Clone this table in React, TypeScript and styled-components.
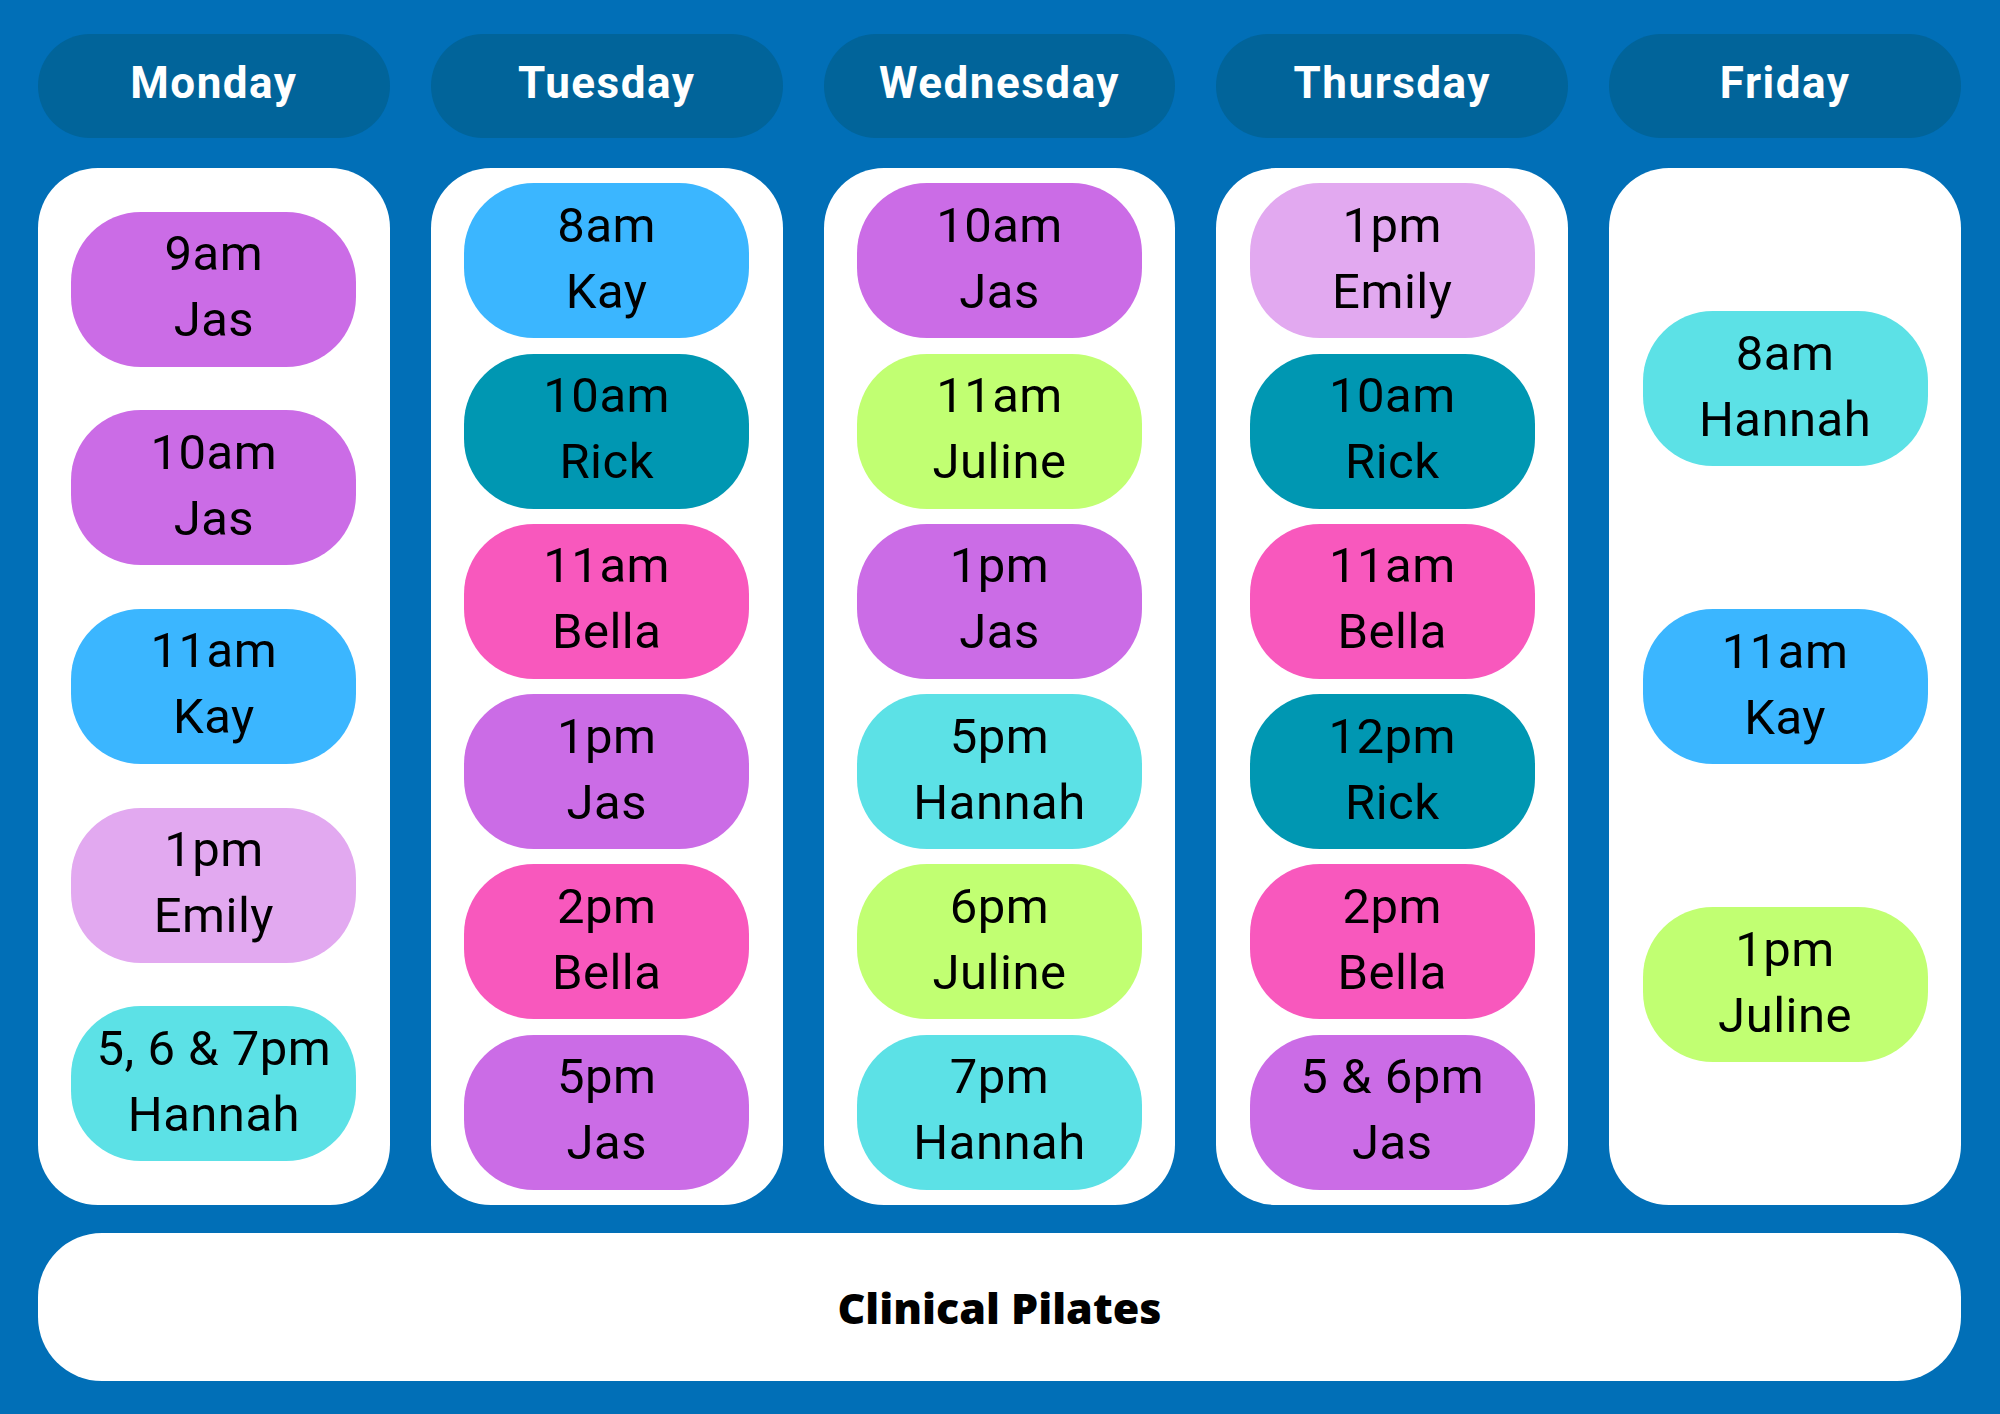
import styled, { createGlobalStyle } from 'styled-components';

const GlobalStyle = createGlobalStyle`
  html, body {
    margin: 0;
    padding: 0;
    background: #016fb7;
  }
  * {
    box-sizing: border-box;
  }
`;

const Board = styled.main`
  width: 2000px;
  height: 1414px;
  padding: 34px 39px 0 38px;
  background: #016fb7;
  display: grid;
  grid-template-columns: repeat(5, 1fr);
  grid-template-rows: 104px 1037px 146px;
  column-gap: 41px;
  row-gap: 30px;
  font-family: Roboto, 'Noto Sans', sans-serif;
`;

const DayHeader = styled.div`
  display: flex;
  align-items: center;
  justify-content: center;
  padding-bottom: 6px;
  background: #01649a;
  border-radius: 52px;
  color: #ffffff;
  font-size: 44px;
  font-weight: 700;
  letter-spacing: 1.5px;
`;

const DayColumn = styled.section`
  display: flex;
  flex-direction: column;
  align-items: center;
  justify-content: space-evenly;
  background: #ffffff;
  border-radius: 60px;
`;

const Slot = styled.div<{ $bg: string }>`
  width: 285px;
  height: 155px;
  display: flex;
  flex-direction: column;
  align-items: center;
  justify-content: center;
  padding-bottom: 4px;
  background: ${({ $bg }) => $bg};
  border-radius: 70px;
  color: #000000;
  font-size: 49px;
  line-height: 66px;
  letter-spacing: 0.5px;
  text-align: center;
`;

const Banner = styled.footer`
  grid-column: 1 / -1;
  margin-top: -2px;
  display: flex;
  align-items: center;
  justify-content: center;
  background: #ffffff;
  border-radius: 64px;
  font-family: 'Open Sans', 'Noto Sans', sans-serif;
  font-size: 43px;
  font-weight: 800;
  color: #000000;
`;

const colors = {
  purple: '#cb6ce6',
  lilac: '#e2a9f0',
  sky: '#3bb6ff',
  teal: '#0097b2',
  pink: '#f858bd',
  cyan: '#5ce1e6',
  lime: '#c1ff72',
};

type Session = { time: string; who: string; color: keyof typeof colors };

const week: { day: string; sessions: Session[] }[] = [
  {
    day: 'Monday',
    sessions: [
      { time: '9am', who: 'Jas', color: 'purple' },
      { time: '10am', who: 'Jas', color: 'purple' },
      { time: '11am', who: 'Kay', color: 'sky' },
      { time: '1pm', who: 'Emily', color: 'lilac' },
      { time: '5, 6 & 7pm', who: 'Hannah', color: 'cyan' },
    ],
  },
  {
    day: 'Tuesday',
    sessions: [
      { time: '8am', who: 'Kay', color: 'sky' },
      { time: '10am', who: 'Rick', color: 'teal' },
      { time: '11am', who: 'Bella', color: 'pink' },
      { time: '1pm', who: 'Jas', color: 'purple' },
      { time: '2pm', who: 'Bella', color: 'pink' },
      { time: '5pm', who: 'Jas', color: 'purple' },
    ],
  },
  {
    day: 'Wednesday',
    sessions: [
      { time: '10am', who: 'Jas', color: 'purple' },
      { time: '11am', who: 'Juline', color: 'lime' },
      { time: '1pm', who: 'Jas', color: 'purple' },
      { time: '5pm', who: 'Hannah', color: 'cyan' },
      { time: '6pm', who: 'Juline', color: 'lime' },
      { time: '7pm', who: 'Hannah', color: 'cyan' },
    ],
  },
  {
    day: 'Thursday',
    sessions: [
      { time: '1pm', who: 'Emily', color: 'lilac' },
      { time: '10am', who: 'Rick', color: 'teal' },
      { time: '11am', who: 'Bella', color: 'pink' },
      { time: '12pm', who: 'Rick', color: 'teal' },
      { time: '2pm', who: 'Bella', color: 'pink' },
      { time: '5 & 6pm', who: 'Jas', color: 'purple' },
    ],
  },
  {
    day: 'Friday',
    sessions: [
      { time: '8am', who: 'Hannah', color: 'cyan' },
      { time: '11am', who: 'Kay', color: 'sky' },
      { time: '1pm', who: 'Juline', color: 'lime' },
    ],
  },
];

export default function App() {
  return (
    <>
      <GlobalStyle />
      <Board>
        {week.map((d) => (
          <DayHeader key={d.day}>{d.day}</DayHeader>
        ))}
        {week.map((d) => (
          <DayColumn key={d.day}>
            {d.sessions.map((s, i) => (
              <Slot key={i} $bg={colors[s.color]}>
                <span>{s.time}</span>
                <span>{s.who}</span>
              </Slot>
            ))}
          </DayColumn>
        ))}
        <Banner>Clinical Pilates</Banner>
      </Board>
    </>
  );
}
